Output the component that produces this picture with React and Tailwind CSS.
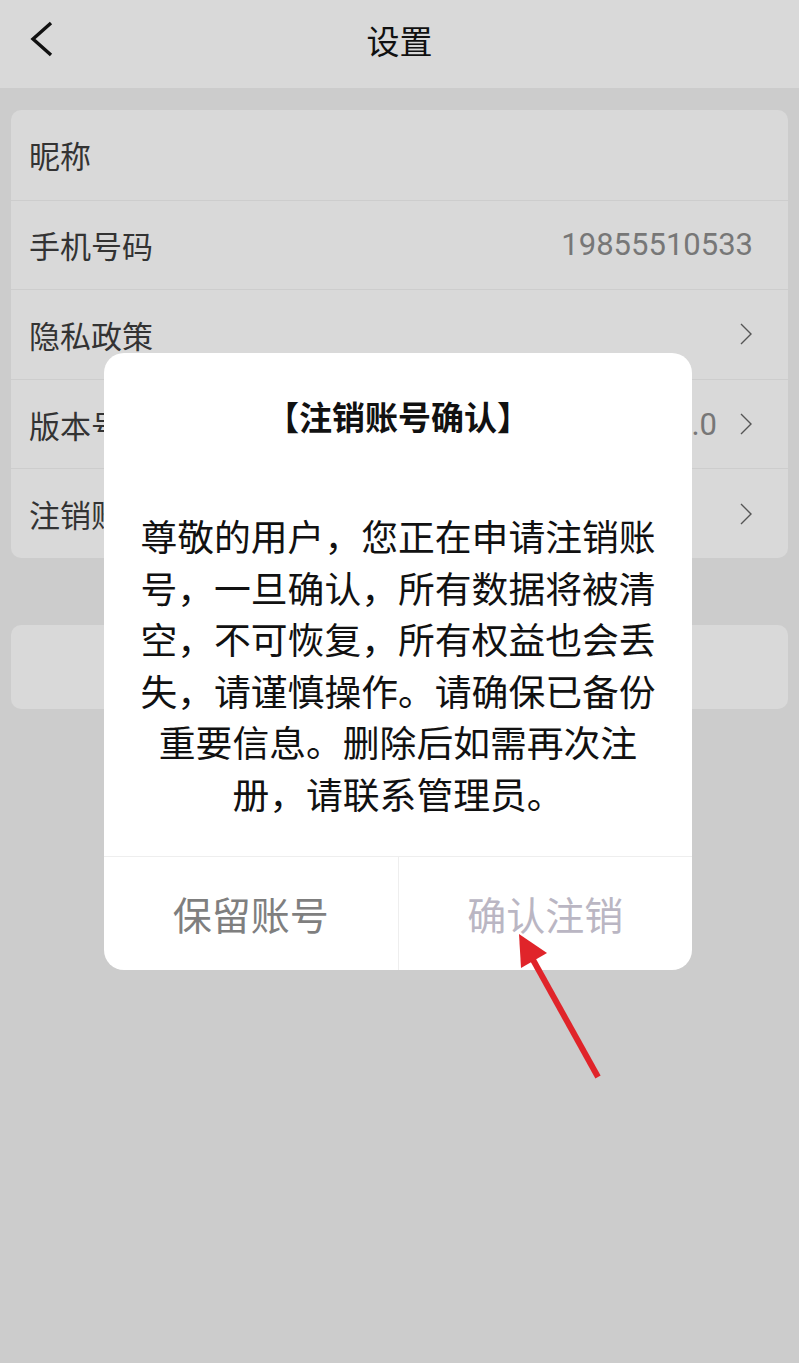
const ROWS = [
  { label: "昵称" },
  { label: "手机号码", value: "19855510533" },
  { label: "隐私政策", arrow: true },
  { label: "版本号", value: "1.0.0", arrow: true },
  { label: "注销账号", arrow: true },
];

function Chevron() {
  return (
    <svg width="14" height="24" viewBox="0 0 14 24" className="ml-[22px] shrink-0">
      <path d="M2 2 L12 12 L2 22" fill="none" stroke="#555" strokeWidth="1.4" />
    </svg>
  );
}

export default function App() {
  return (
    <div
      className="relative w-[799px] h-[1363px] overflow-hidden bg-[#cccccc]"
      style={{ fontFamily: '"Noto Sans CJK SC", Roboto, sans-serif' }}
    >
      {/* Header */}
      <div className="relative h-[88px] bg-[#d9d9d9] flex items-center justify-center">
        <svg className="absolute left-[28px] top-[20px]" width="28" height="38" viewBox="0 0 28 38">
          <path d="M23 3 L5 19 L23 35" fill="none" stroke="#111" strokeWidth="3.4" />
        </svg>
        <span className="text-[33px] leading-none text-[#111] -mt-[8px]">设置</span>
      </div>

      {/* Settings list */}
      <div className="mx-[11px] mt-[22px] rounded-[10px] bg-[#d9d9d9] overflow-hidden">
        {ROWS.map((row, i) => (
          <div
            key={row.label}
            className={`h-[89.6px] flex items-center pl-[18px] pr-[35px] ${
              i > 0 ? "border-t border-[#cdcdcd]" : ""
            }`}
          >
            <span className="text-[31px] leading-none text-[#333] flex-1">{row.label}</span>
            {row.value && (
              <span
                className="text-[31px] leading-none text-[#777]"
                style={{ fontFamily: "Roboto, sans-serif" }}
              >
                {row.value}
              </span>
            )}
            {row.arrow && <Chevron />}
          </div>
        ))}
      </div>

      <div className="mx-[11px] mt-[67px] h-[84px] rounded-[10px] bg-[#d9d9d9]" />

      {/* Dialog */}
      <div className="absolute left-[104px] top-[353px] w-[588px] rounded-[20px] bg-white flex flex-col">
        <div className="pt-[41px] px-[34px] pb-[37px] flex flex-col items-center">
          <div className="text-[33px] leading-[44px] font-bold text-[#111]">【注销账号确认】</div>
          <p className="mt-[72px] text-[36.8px] leading-[51.5px] text-center text-[#111]">
            尊敬的用户，您正在申请注销账号，一旦确认，所有数据将被清空，不可恢复，所有权益也会丢失，请谨慎操作。请确保已备份重要信息。删除后如需再次注册，请联系管理员。
          </p>
        </div>
        <div className="h-[114px] border-t border-[#eeeeee] flex">
          <button className="flex-1 flex items-center justify-center text-[39px] text-[#7f7f7f] border-r border-[#eeeeee]">
            保留账号
          </button>
          <button className="flex-1 flex items-center justify-center text-[39px] text-[#bab6c3]">
            确认注销
          </button>
        </div>
      </div>

      {/* Red annotation arrow */}
      <svg className="absolute left-0 top-0" width="799" height="1363" viewBox="0 0 799 1363">
        <line x1="598" y1="1077" x2="532" y2="958" stroke="#e0242a" strokeWidth="6" />
        <polygon points="519,934 521,968 547,953" fill="#e0242a" />
      </svg>
    </div>
  );
}
